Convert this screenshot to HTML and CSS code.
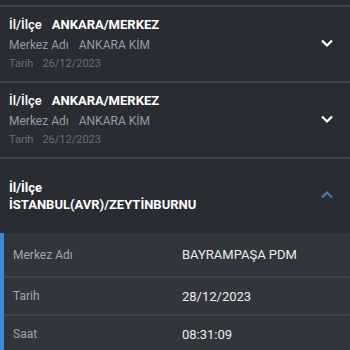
FILE: index.html
```html
<!DOCTYPE html>
<html lang="tr">
<head>
<meta charset="utf-8">
<link rel="stylesheet" href="styles.css">
</head>
<body>
<div class="list">
  <div class="sep"></div>
  <div class="card">
    <div class="info">
      <div class="l1"><span class="lbl">İl/İlçe</span><span class="val">ANKARA/MERKEZ</span></div>
      <div class="l2"><span>Merkez Adı</span><span class="val2">ANKARA KİM</span></div>
      <div class="l3"><span>Tarih</span><span class="val2">26/12/2023</span></div>
    </div>
    <svg class="chev" width="14" height="10" viewBox="0 0 14 10"><path d="M2 2.5 L7 7.5 L12 2.5" fill="none" stroke="#ffffff" stroke-width="2.2"/></svg>
  </div>
  <div class="sep"></div>
  <div class="card">
    <div class="info">
      <div class="l1"><span class="lbl">İl/İlçe</span><span class="val">ANKARA/MERKEZ</span></div>
      <div class="l2"><span>Merkez Adı</span><span class="val2">ANKARA KİM</span></div>
      <div class="l3"><span>Tarih</span><span class="val2">26/12/2023</span></div>
    </div>
    <svg class="chev" width="14" height="10" viewBox="0 0 14 10"><path d="M2 2.5 L7 7.5 L12 2.5" fill="none" stroke="#ffffff" stroke-width="2.2"/></svg>
  </div>
  <div class="sep"></div>
  <div class="card">
    <div class="info">
      <div class="h1">İl/İlçe</div>
      <div class="h1">İSTANBUL(AVR)/ZEYTİNBURNU</div>
    </div>
    <svg class="chev up" width="14" height="10" viewBox="0 0 14 10"><path d="M2 7.5 L7 2.5 L12 7.5" fill="none" stroke="#4c7ca6" stroke-width="2.2"/></svg>
  </div>
  <div class="details">
    <div class="row first"><span class="dl">Merkez Adı</span><span class="dv">BAYRAMPAŞA PDM</span></div>
    <div class="row"><span class="dl">Tarih</span><span class="dv">28/12/2023</span></div>
    <div class="row"><span class="dl">Saat</span><span class="dv">08:31:09</span></div>
  </div>
</div>
</body>
</html>
```
FILE: styles.css
```css
html, body {
  margin: 0;
  padding: 0;
  background: #292c33;
  font-family: Roboto, "Noto Sans", sans-serif;
  overflow: hidden;
}
.list {
  padding-top: 5px;
  display: flex;
  flex-direction: column;
}
.sep {
  height: 2px;
  background: #3b3e46;
}
.card {
  height: 74px;
  display: flex;
  align-items: center;
  justify-content: space-between;
  padding: 0 16px 0 9px;
  box-sizing: border-box;
}
.info {
  display: flex;
  flex-direction: column;
}
.l1 {
  font-size: 13px;
  line-height: 20px;
  color: #ffffff;
  display: flex;
  gap: 10px;
}
.lbl { font-weight: 500; }
.val { font-weight: 700; }
.l2 {
  font-size: 12px;
  line-height: 20px;
  color: #989ba1;
  display: flex;
  gap: 10px;
}
.l3 {
  font-size: 11px;
  line-height: 18px;
  color: #6b6f76;
  display: flex;
  gap: 9px;
}
.h1 {
  font-size: 13px;
  line-height: 17px;
  font-weight: 700;
  color: #ffffff;
}
.chev { display: block; margin-top: -2px; }
.details {
  background: #32353c;
  border-left: 4px solid #3a8ad6;
  display: flex;
  flex-direction: column;
}
.row {
  height: 38px;
  display: flex;
  align-items: center;
  padding-left: 9px;
  border-bottom: 2px solid #3f424a;
  box-sizing: border-box;
}
.row.first { height: 45px; }
.dl {
  width: 169px;
  font-size: 12px;
  color: #a3a6ac;
}
.dv {
  font-size: 13px;
  color: #ececec;
}
```
